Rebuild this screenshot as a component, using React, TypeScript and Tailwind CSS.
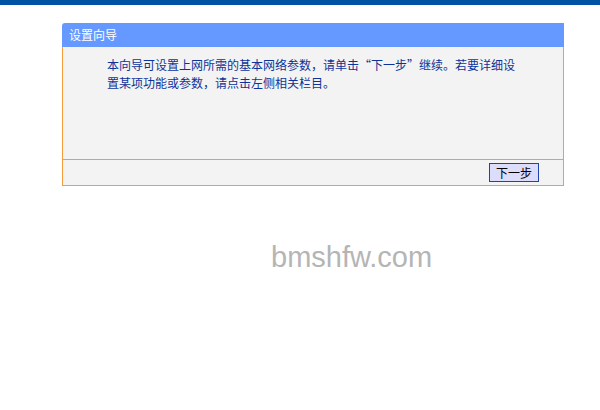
export default function App() {
  return (
    <div className="relative h-[410px] w-[600px] overflow-hidden bg-white font-['Noto_Sans_CJK_SC','Liberation_Sans',sans-serif]">
      {/* top strip */}
      <div className="h-[5px] bg-[#0052a4]" />

      {/* wizard panel */}
      <div className="ml-[62px] mt-[18px] w-[502px]">
        <div className="flex h-[24px] items-center rounded-tl-[3px] bg-[#6699ff] pl-[7px] text-[12px] text-white">
          设置向导
        </div>
        <div className="border-x border-b border-[#f79c3c] bg-[#f3f3f3]">
          <div className="h-[112px] pl-[44px] pt-[9px]">
            {/* fwid keeps the curly quotes on full-width cells */}
            <p className="w-[410px] text-[12px] leading-[18px] text-[#0d3399] [font-feature-settings:'fwid']">
              本向导可设置上网所需的基本网络参数，请单击“下一步”继续。若要详细设置某项功能或参数，请点击左侧相关栏目。
            </p>
          </div>
          <div className="flex h-[26px] items-start justify-end border-t border-[#f79c3c] pr-[24px] pt-[3px]">
            <button className="flex h-[19px] w-[50px] items-center justify-center border border-[#1f44a8] bg-[#dcdcfc] text-[12px] leading-none text-black">
              下一步
            </button>
          </div>
        </div>
      </div>

      {/* watermark */}
      <div className="ml-[271px] mt-[57px] font-['Liberation_Sans',sans-serif] text-[29px] leading-none text-[#b5b5b5]">
        bmshfw.com
      </div>
    </div>
  );
}
